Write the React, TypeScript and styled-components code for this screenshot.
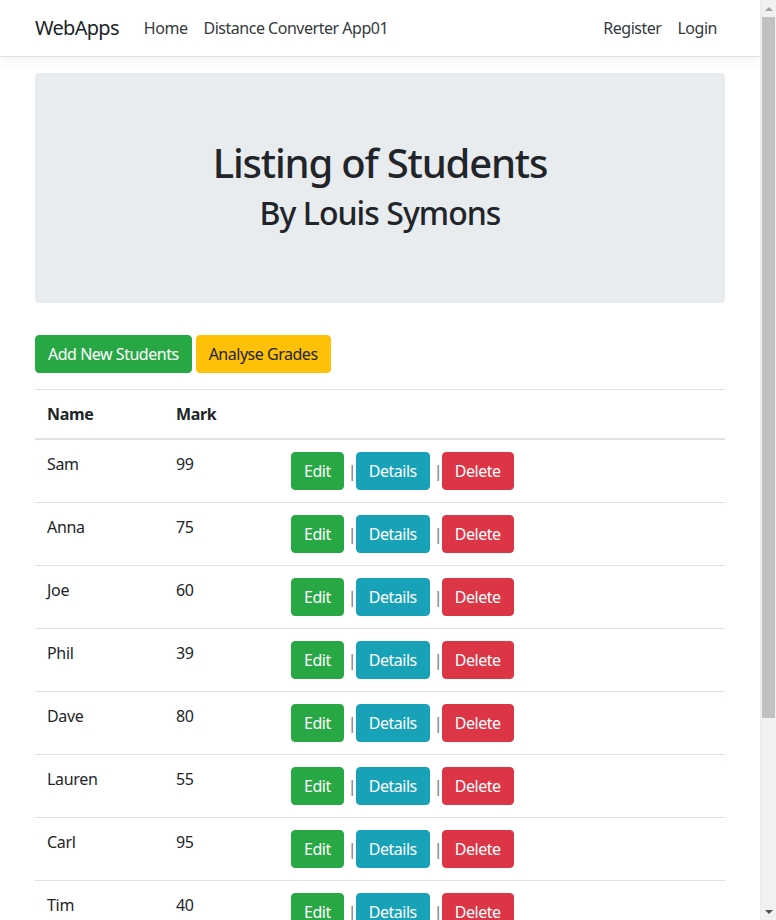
import React from "react";
import styled, { createGlobalStyle } from "styled-components";

const GlobalStyle = createGlobalStyle`
  *, *::before, *::after { box-sizing: border-box; }
  html, body { overflow: hidden; }
  body {
    margin: 0;
    font-family: "Segoe UI", "Noto Sans", "Open Sans", sans-serif;
    font-size: 16px;
    line-height: 1.5;
    letter-spacing: -0.02em;
    color: #212529;
    background: #fff;
  }
`;

const Viewport = styled.div`
  display: flex;
  height: 100vh;
  overflow: hidden;
`;

const Page = styled.div`
  flex: 1;
  min-width: 0;
  overflow: hidden;
`;

const Scrollbar = styled.aside`
  width: 16px;
  flex: none;
  display: flex;
  flex-direction: column;
  align-items: center;
  background: #f1f1f1;
  border-left: 1px solid #ececec;
`;

const Arrow = styled.div<{ $down?: boolean }>`
  height: 17px;
  flex: none;
  display: flex;
  align-items: center;
  justify-content: center;
  &::before {
    content: "";
    border-left: 4px solid transparent;
    border-right: 4px solid transparent;
    ${(p) =>
      p.$down
        ? "border-top: 4px solid #505050;"
        : "border-bottom: 4px solid #a3a3a3;"}
  }
`;

const Thumb = styled.div`
  width: 13px;
  height: 701px;
  flex: none;
  background: #c1c1c1;
`;

const Track = styled.div`
  flex: 1;
`;

const Header = styled.header`
  background: #fff;
  border-bottom: 1px solid #dee2e6;
  box-shadow: 0 4px 12px rgba(0, 0, 0, 0.05);
`;

const Navbar = styled.nav`
  max-width: 720px;
  margin: 0 auto;
  padding: 8px 15px;
  display: flex;
  align-items: center;
`;

const Brand = styled.a`
  font-size: 20px;
  line-height: 30px;
  letter-spacing: -0.035em;
  padding: 5px 0;
  margin-right: 17px;
  color: #212529;
  text-decoration: none;
`;

const NavList = styled.div<{ $end?: boolean }>`
  display: flex;
  margin-left: ${(p) => (p.$end ? "auto" : "0")};
`;

const NavLink = styled.a`
  padding: 8px;
  color: #343a40;
  letter-spacing: -0.03em;
  text-decoration: none;
`;

const Main = styled.main`
  max-width: 720px;
  margin: 0 auto;
  padding: 16px 15px 0;
`;

const Jumbotron = styled.section`
  background: #e9ecef;
  border-radius: 4px;
  padding: 64px 32px;
  margin-bottom: 32px;
  text-align: center;
`;

const Title = styled.h1`
  margin: 0 0 7px;
  padding-top: 2px;
  font-size: 40px;
  font-weight: 500;
  line-height: 48px;
  letter-spacing: -0.03em;
`;

const Subtitle = styled.h2`
  margin: 0 0 7px;
  font-size: 32px;
  font-weight: 500;
  line-height: 1.2;
  letter-spacing: -0.03em;
`;

const Toolbar = styled.div`
  display: flex;
  gap: 4px;
  margin-bottom: 16px;
`;

const variants = {
  success: { bg: "#28a745", fg: "#fff" },
  info: { bg: "#17a2b8", fg: "#fff" },
  danger: { bg: "#dc3545", fg: "#fff" },
  warning: { bg: "#ffc107", fg: "#212529" },
};

const Button = styled.a<{ $variant: keyof typeof variants }>`
  display: inline-block;
  padding: 6px 12px;
  font-size: 16px;
  line-height: 24px;
  letter-spacing: -0.03em;
  border: 1px solid ${(p) => variants[p.$variant].bg};
  border-radius: 4px;
  background: ${(p) => variants[p.$variant].bg};
  color: ${(p) => variants[p.$variant].fg};
  text-decoration: none;
  cursor: pointer;
`;

const Table = styled.table`
  width: 100%;
  border-collapse: collapse;
  margin-bottom: 16px;
`;

const Th = styled.th<{ $w?: number }>`
  text-align: left;
  font-weight: 700;
  padding: 12px;
  vertical-align: bottom;
  border-top: 1px solid #dee2e6;
  border-bottom: 2px solid #dee2e6;
  width: ${(p) => (p.$w ? `${p.$w}px` : "auto")};
`;

const Td = styled.td`
  padding: 12px;
  vertical-align: top;
  border-top: 1px solid #dee2e6;
`;

const Actions = styled.div`
  display: flex;
  align-items: center;
  gap: 4px;
`;

const Sep = styled.span`
  display: inline-block;
  width: 4px;
  text-align: center;
  color: #6c757d;
`;

const students = [
  { name: "Sam", mark: 99 },
  { name: "Anna", mark: 75 },
  { name: "Joe", mark: 60 },
  { name: "Phil", mark: 39 },
  { name: "Dave", mark: 80 },
  { name: "Lauren", mark: 55 },
  { name: "Carl", mark: 95 },
  { name: "Tim", mark: 40 },
  { name: "Mary", mark: 70 },
  { name: "Tom", mark: 65 },
  { name: "Kate", mark: 88 },
];

export default function App() {
  return (
    <>
      <GlobalStyle />
      <Viewport>
        <Page>
          <Header>
            <Navbar>
              <Brand>WebApps</Brand>
              <NavList>
                <NavLink>Home</NavLink>
                <NavLink>Distance Converter App01</NavLink>
              </NavList>
              <NavList $end>
                <NavLink>Register</NavLink>
                <NavLink>Login</NavLink>
              </NavList>
            </Navbar>
          </Header>
          <Main>
            <Jumbotron>
              <Title>Listing of Students</Title>
              <Subtitle>By Louis Symons</Subtitle>
            </Jumbotron>
            <Toolbar>
              <Button $variant="success">Add New Students</Button>
              <Button $variant="warning">Analyse Grades</Button>
            </Toolbar>
            <Table>
              <thead>
                <tr>
                  <Th $w={129}>Name</Th>
                  <Th $w={115}>Mark</Th>
                  <Th></Th>
                </tr>
              </thead>
              <tbody>
                {students.map((s) => (
                  <tr key={s.name}>
                    <Td>{s.name}</Td>
                    <Td>{s.mark}</Td>
                    <Td>
                      <Actions>
                        <Button $variant="success">Edit</Button>
                        <Sep>|</Sep>
                        <Button $variant="info">Details</Button>
                        <Sep>|</Sep>
                        <Button $variant="danger">Delete</Button>
                      </Actions>
                    </Td>
                  </tr>
                ))}
              </tbody>
            </Table>
          </Main>
        </Page>
        <Scrollbar>
          <Arrow />
          <Thumb />
          <Track />
          <Arrow $down />
        </Scrollbar>
      </Viewport>
    </>
  );
}
